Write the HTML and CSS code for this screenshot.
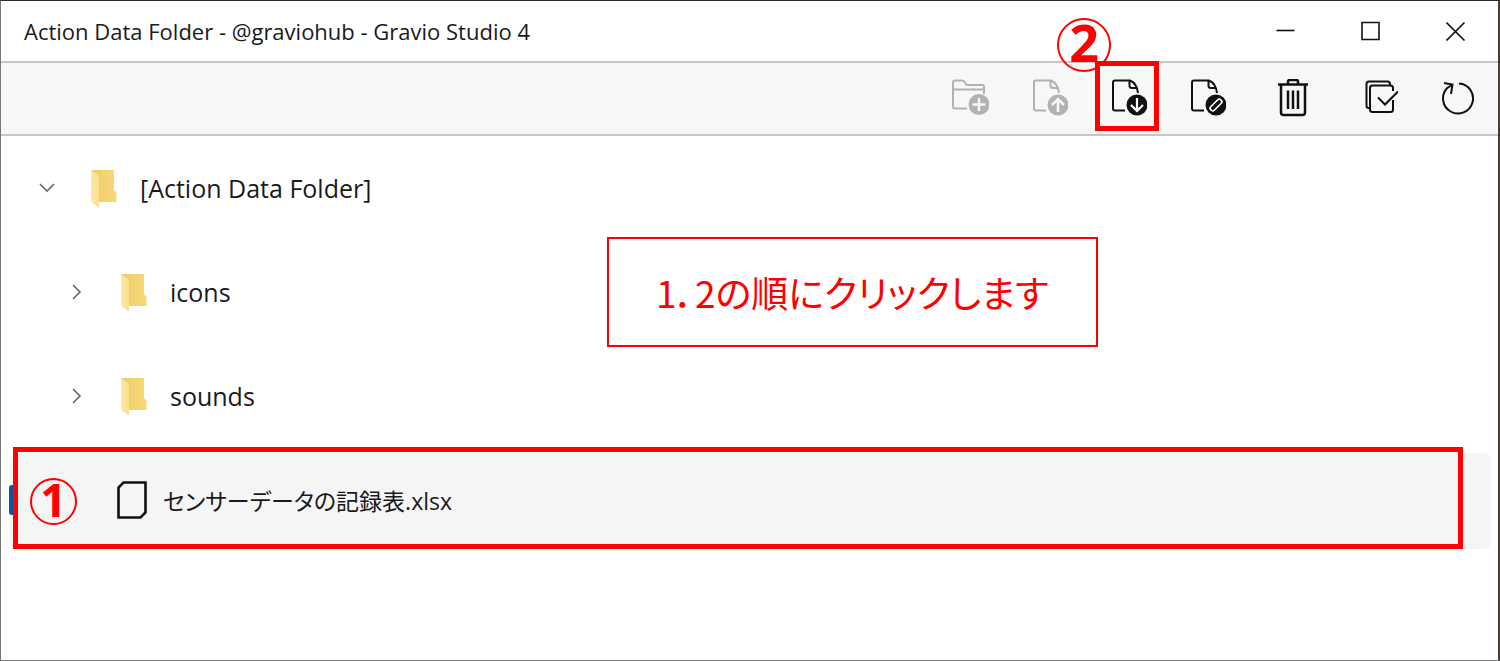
FILE: index.html
```html
<!DOCTYPE html>
<html lang="ja">
<head>
<meta charset="utf-8">
<title>Action Data Folder</title>
<link rel="stylesheet" href="styles.css">
</head>
<body>
<svg class="defs" aria-hidden="true">
  <defs>
    <linearGradient id="flap" x1="0" y1="0" x2="1" y2="0"><stop offset="0" stop-color="#fde9a6"/><stop offset="1" stop-color="#fbdf8c"/></linearGradient>
    <linearGradient id="back" x1="0" y1="0" x2="1" y2="0"><stop offset="0" stop-color="#eccb68"/><stop offset="1" stop-color="#f9d978"/></linearGradient>
    <symbol id="folder" viewBox="0 0 28 40">
      <path d="M1 1h23v20l2.500 2.500V33H9z" fill="url(#back)"/>
      <path d="M1 1l7 5q1 1 1 2.500V38.500L2.500 34Q1 33 1 31.500z" fill="url(#flap)"/>
    </symbol>
    <symbol id="page" viewBox="0 0 38 38">
      <path d="M14 31.500H4q-2 0-2-2V3.500q0-2 2-2h15q7 3 8 12.500M18.500 1.500v5q0 2.500 2.500 2.500h4" fill="none" stroke="currentColor" stroke-width="2"/>
      <circle cx="26" cy="26" r="10.500" fill="currentColor"/>
    </symbol>
  </defs>
</svg>
<main class="window">
  <header class="titlebar">
    <h1 class="title">Action Data Folder - @graviohub - Gravio Studio 4</h1>
    <div class="controls">
      <button class="control" aria-label="Minimize"><svg width="20" height="20" viewBox="0 0 20 20"><path d="M.5 9.500h18"/></svg></button>
      <button class="control" aria-label="Maximize"><svg width="20" height="20" viewBox="0 0 20 20"><path d="M1 1.500h17v17H1z"/></svg></button>
      <button class="control" aria-label="Close"><svg width="20" height="20" viewBox="0 0 20 20"><path d="M.5 1.500l18 18M18.500 1.500l-18 18"/></svg></button>
    </div>
  </header>
  <div class="toolbar">
    <button class="tool" aria-label="New folder" disabled><svg width="38" height="38" viewBox="0 0 38 38"><path d="M16 29.500H4q-2 0-2-2v-24q0-2 2-2h7q1.500 0 2.500 1.500l2 3H31q2 0 2 2v7M2 10.500h31" fill="none" stroke="currentColor" stroke-width="2"/><circle cx="28" cy="25.500" r="10.500" fill="currentColor"/><path d="M28 19v13M21.500 25.500h13" stroke="#f7f7f7" stroke-width="2.500"/></svg></button>
    <button class="tool" aria-label="Upload file" disabled><svg width="36" height="38" viewBox="0 0 36 38"><use href="#page" width="38" height="38"/><path d="M26 33V20M20 26l6-6 6 6" fill="none" stroke="#f7f7f7" stroke-width="2.500"/></svg></button>
    <button class="tool" aria-label="Download file"><svg width="36" height="38" viewBox="0 0 36 38"><use href="#page" width="38" height="38"/><path d="M26 19v13M20 26l6 6 6-6" fill="none" stroke="#fff" stroke-width="2.200"/></svg><span class="mark mark-tool"></span><span class="badge badge-tool">2</span></button>
    <button class="tool" aria-label="Rename"><svg width="36" height="38" viewBox="0 0 36 38"><use href="#page" width="38" height="38"/><rect x="19" y="23.500" width="14" height="5" rx="2" transform="rotate(-45 26 26)" fill="none" stroke="#fff" stroke-width="1.600"/></svg></button>
    <button class="tool tool-wide" aria-label="Delete"><svg width="32" height="38" viewBox="0 0 32 38"><g fill="none" stroke="currentColor" stroke-width="2.500"><path d="M1 5.500h30M11 5V2.500Q11 1 12.500 1h7Q21 1 21 2.500V5M4 6v27.500q0 2.500 2.500 2.500h19q2.500 0 2.500-2.500V6"/><path d="M11 11.500v18.500M16 11.500v18.500M21 11.500v18.500"/></g></svg></button>
    <button class="tool" aria-label="Select all"><svg width="38" height="38" viewBox="0 0 38 38"><g fill="none" stroke="currentColor" stroke-width="2"><path d="M10 29H8.500Q6.500 29 6.500 26.500V5Q6.500 2.500 9 2.500h18.500Q30 2.500 30 5v1.500" /><path d="M33 12V9q0-2.500-2.500-2.500h-18Q10 6.500 10 9v21.500Q10 33 12.500 33h18q2.500 0 2.500-2.500V21"/><path d="M18 18.500l7 7L38 12.500"/></g></svg></button>
    <button class="tool" aria-label="Refresh"><svg width="34" height="38" viewBox="0 0 34 38"><path d="M18 4.500A15 15 0 1 1 6 9.300L11.500 5.500M3 4l8.500 1.500L10 15" fill="none" stroke="currentColor" stroke-width="2"/></svg></button>
  </div>
  <ul class="tree">
    <li class="row">
      <button class="twist" aria-label="Collapse"><svg width="18" height="18" viewBox="0 0 18 18"><path d="M2 5l7 7 7-7"/></svg></button>
      <svg class="folder" width="28" height="40"><use href="#folder"/></svg>
      <span class="name">[Action Data Folder]</span>
    </li>
    <li class="row child">
      <button class="twist" aria-label="Expand icons"><svg width="18" height="18" viewBox="0 0 18 18"><path d="M5 2l7 7-7 7"/></svg></button>
      <svg class="folder" width="28" height="40"><use href="#folder"/></svg>
      <span class="name">icons</span>
    </li>
    <li class="row child">
      <button class="twist" aria-label="Expand sounds"><svg width="18" height="18" viewBox="0 0 18 18"><path d="M5 2l7 7-7 7"/></svg></button>
      <svg class="folder" width="28" height="40"><use href="#folder"/></svg>
      <span class="name">sounds</span>
    </li>
    <li class="row selected">
      <svg class="file" width="30" height="38" viewBox="0 0 30 38"><path d="M6.500 1.500h22v30l-5 5h-22v-30z" fill="none" stroke="#111" stroke-width="2.600"/></svg>
      <span class="filename">センサーデータの記録表.xlsx</span>
      <span class="mark mark-row"></span>
      <span class="badge badge-row">1</span>
    </li>
  </ul>
  <p class="callout">1．2の順にクリックします</p>
</main>
</body>
</html>
```
FILE: styles.css
```css
* { box-sizing: border-box; }
body {
  margin: 0;
  background: #fff;
  color: #1a1a1a;
  font-family: "Open Sans", "Noto Sans CJK JP", sans-serif;
}
.defs { position: absolute; width: 0; height: 0; }
button {
  padding: 0;
  border: 0;
  background: none;
  color: inherit;
  font: inherit;
}
svg { display: block; }
.window {
  position: relative;
  min-height: 100vh;
  border: 1px solid #777;
  border-top-color: #2e2a2c;
  border-right: 2px solid #50383b;
}
.titlebar {
  display: flex;
  justify-content: space-between;
  height: 62px;
  padding-left: 23px;
  border-bottom: 2px solid #c6c6c6;
}
.title {
  margin: 0;
  font-size: 22px;
  font-weight: 400;
  line-height: 60px;
  white-space: nowrap;
}
.controls { display: flex; }
.control {
  display: flex;
  align-items: center;
  justify-content: center;
  width: 85px;
}
.control path { fill: none; stroke: #111; stroke-width: 1.600; }
.toolbar {
  display: flex;
  align-items: center;
  justify-content: flex-end;
  gap: 43px;
  height: 73px;
  padding: 0 23px 2px 0;
  border-bottom: 2px solid #c6c6c6;
  background: #f7f7f7;
}
.tool { position: relative; color: #111; }
.tool:disabled { color: #b2b2b2; }
.tool-wide { padding: 0 8px; }
.tree {
  display: flex;
  flex-direction: column;
  gap: 8px;
  margin: 0;
  padding: 5px 7px 5px 8px;
  list-style: none;
}
.row {
  position: relative;
  display: flex;
  align-items: center;
  height: 96px;
  padding: 0 0 2px 29px;
  border-radius: 8px;
}
.child { padding-left: 59px; }
.twist svg { fill: none; stroke: #666; stroke-width: 1.600; }
.folder { margin: 2px 22px 0 34px; }
.name { font-size: 25px; }
.selected { padding-left: 108px; background: #f5f5f5; }
.selected::before {
  content: "";
  position: absolute;
  left: 0;
  top: 32px;
  width: 6px;
  height: 30px;
  border-radius: 3px;
  background: #0a56a4;
}
.filename {
  margin-left: 16px;
  font-size: 23px;
  font-feature-settings: "palt";
}
.mark { position: absolute; border: 5px solid #f00; }
.mark-row { inset: -6px 28px 0 4px; }
.mark-tool { inset: -18px -12px -14px -16px; }
.badge {
  position: absolute;
  display: flex;
  align-items: center;
  justify-content: center;
  padding-bottom: 5px;
  border: 2px solid #f00;
  border-radius: 50%;
  color: #f00;
  font-family: "Noto Sans", sans-serif;
  font-weight: 700;
  line-height: 1;
}
.badge-row { left: 21px; top: 25px; width: 47px; height: 47px; font-size: 46px; }
.badge-tool { left: -54px; top: -61px; width: 54px; height: 54px; font-size: 52px; }
.callout {
  position: absolute;
  left: 606px;
  top: 236px;
  margin: 0;
  padding: 0 47px;
  border: 2px solid #f00;
  background: #fff;
  color: #f00;
  font-family: "Noto Sans CJK JP", sans-serif;
  font-size: 37px;
  font-feature-settings: "palt";
  line-height: 106px;
  white-space: nowrap;
}
```
